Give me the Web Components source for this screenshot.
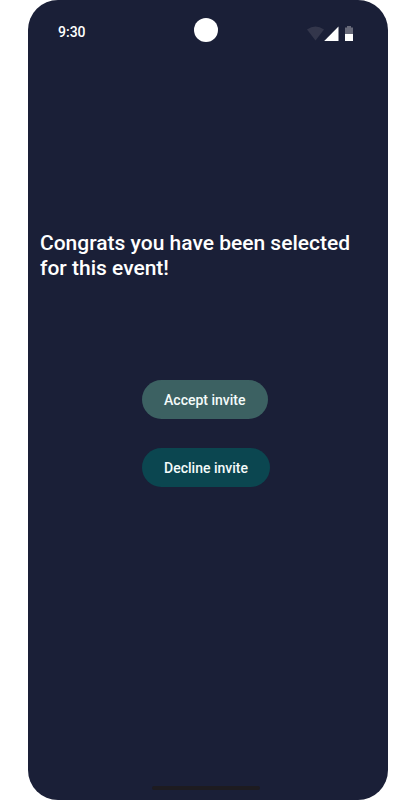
<!DOCTYPE html>
<html lang="en">
<head>
<meta charset="utf-8">
<meta name="viewport" content="width=device-width, initial-scale=1">
<title>Event invite</title>
<style>
  body { margin: 0; background: #fff; font-family: Roboto, "Liberation Sans", sans-serif; color: #fff; }
</style>
</head>
<body>
<phone-screen>
  <status-bar slot="status">9:30</status-bar>
  <invite-message>Congrats you have been selected for this event!</invite-message>
  <invite-actions>
    <pill-button tone="accept">Accept invite</pill-button>
    <pill-button tone="decline">Decline invite</pill-button>
  </invite-actions>
</phone-screen>
<script>
class Base extends HTMLElement {
  constructor() {
    super();
    this.attachShadow({ mode: "open" }).innerHTML = this.constructor.markup;
  }
}

customElements.define("phone-screen", class extends Base {
  static markup = `
    <style>
      :host { display: flex; flex-direction: column; box-sizing: border-box; min-height: 100vh;
        margin: 0 24px 0 28px; padding-right: 4px; border-radius: 30px; background: #1a1f37; }
      main { flex: 1; display: flex; flex-direction: column; padding-top: 167px; }
      footer { display: flex; justify-content: center; padding-bottom: 10px; }
      .handle { width: 108px; height: 4px; border-radius: 2px; background: #1d1b20; }
    </style>
    <slot name="status"></slot>
    <main><slot></slot></main>
    <footer><div class="handle"></div></footer>`;
});

customElements.define("status-bar", class extends Base {
  static markup = `
    <style>
      :host { display: grid; grid-template-columns: 1fr 24px 1fr; align-items: center;
        height: 28px; padding: 18px 30px; font-size: 14px; line-height: 20px; font-weight: 500; }
      .camera { width: 24px; height: 24px; border-radius: 50%; background: #fff; align-self: start; }
      svg { justify-self: end; width: 48px; height: 16px; margin-top: 4px; }
    </style>
    <time><slot></slot></time>
    <div class="camera"></div>
    <svg viewBox="-1 0 48 16" aria-hidden="true">
      <path d="M0 3.6Q8.5-2.5 17 3.6L8.5 14.5Z" fill="#33364b"/>
      <path d="M17.2 15H31.5V0.5Z" fill="#fff"/>
      <path d="M38 8V1.5H40V0H44V1.5H46V8Z" fill="#676979"/>
      <path d="M38 8H46V15H38Z" fill="#fff"/>
    </svg>`;
});

customElements.define("invite-message", class extends Base {
  static markup = `
    <style>
      :host { display: block; padding: 0 12px; }
      h1 { margin: 0; font-size: 21px; line-height: 25px; font-weight: 500; }
    </style>
    <h1><slot></slot></h1>`;
});

customElements.define("invite-actions", class extends Base {
  static markup = `
    <style>
      :host { display: flex; flex-direction: column; align-items: flex-start; gap: 29px;
        width: max-content; margin: 99px auto 0; }
    </style>
    <slot></slot>`;
});

customElements.define("pill-button", class extends Base {
  static markup = `
    <style>
      :host { display: block; --fill: #3c6162; }
      :host([tone="decline"]) { --fill: #0b4650; }
      button { display: block; margin: 0; border: 0; border-radius: 20px; padding: 10px 22px 9px;
        background: var(--fill); color: #f4fbfa; font: 500 14px/20px Roboto, "Liberation Sans", sans-serif; cursor: pointer; }
    </style>
    <button type="button"><slot></slot></button>`;
});
</script>
</body>
</html>
